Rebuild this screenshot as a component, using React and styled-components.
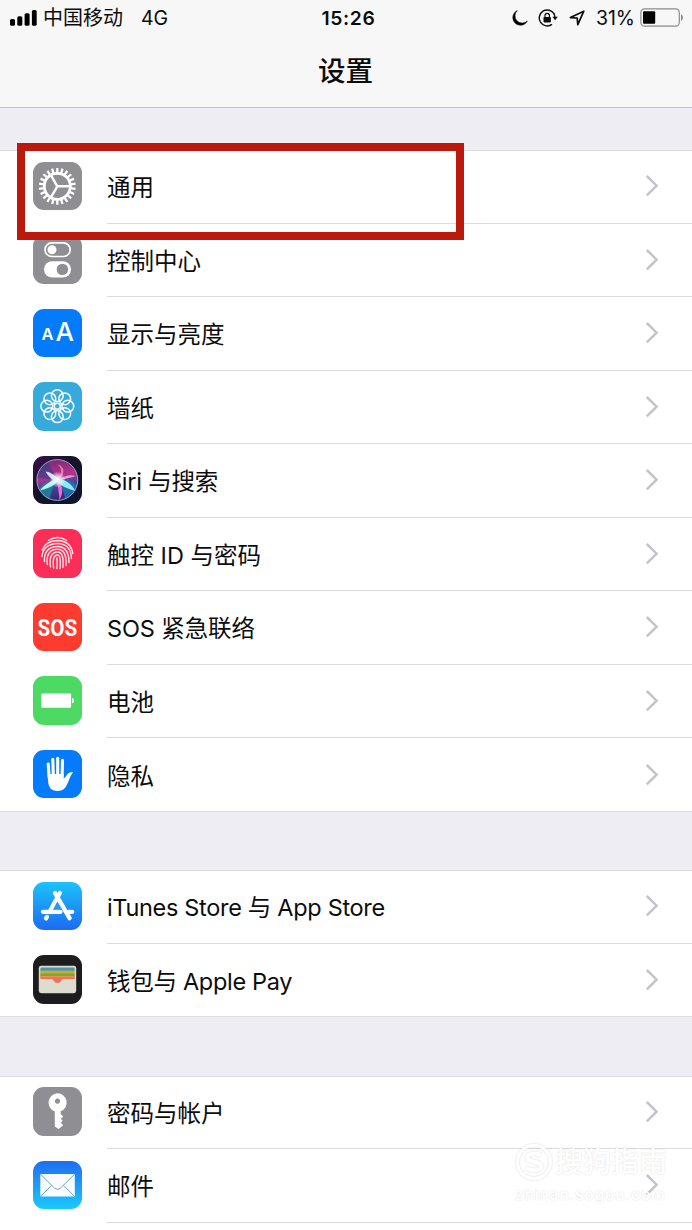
import React from 'react';
import styled, { createGlobalStyle } from 'styled-components';

const GlobalStyle = createGlobalStyle`
  * {
    box-sizing: border-box;
  }

  body {
    margin: 0;
    background: #fff;
    font-family: Inter, "Noto Sans CJK SC", sans-serif;
    color: #0c0c0c;
  }
`;

const Screen = styled.div`
  position: relative;
  width: 692px;
  height: 1230px;
  overflow: hidden;
  background: #eeedf3;
`;

const Header = styled.header`
  height: 107.5px;
  background: #f7f7f7;
  border-bottom: 1px solid #c3c3c6;
`;

const StatusBar = styled.div`
  display: grid;
  grid-template-columns: 1fr auto 1fr;
  align-items: center;
  height: 35px;
  padding: 0 8px 0 10px;
`;

const StatusSide = styled.div`
  display: flex;
  align-items: center;
  justify-content: ${({ $end }) => ($end ? 'flex-end' : 'flex-start')};
`;

const Carrier = styled.span`
  margin-left: 6px;
  padding-top: 1px;
  font-size: 20px;
  line-height: 35px;
`;

const Network = styled.span`
  margin-left: 18px;
  padding-top: 1px;
  font-size: 19.5px;
  line-height: 35px;
`;

const Time = styled.span`
  margin-left: 3px;
  font-size: 19.3px;
  font-weight: 600;
  line-height: 35px;
  letter-spacing: 0.6px;
`;

const Percent = styled.span`
  margin: 0 5px 0 11px;
  padding-top: 1px;
  font-size: 19.5px;
  line-height: 35px;
`;

const StatusIcon = styled.svg`
  flex: none;
  margin-left: ${({ $gap }) => $gap || 0}px;
`;

const Title = styled.h1`
  margin: 0;
  padding-right: 1px;
  font-size: 27.5px;
  font-weight: 500;
  line-height: 72px;
  text-align: center;
`;

const List = styled.main`
  display: flex;
  flex-direction: column;
  gap: 58.5px;
  padding-top: 42.5px;
`;

const Group = styled.section`
  background: #fff;
  box-shadow: inset 0 1px #dcdbe0, inset 0 -1px #dcdbe0;
`;

const Row = styled.div`
  display: flex;
  height: 73.5px;
  padding-left: 33.3px;
`;

const IconTile = styled.div`
  flex: none;
  width: 48.5px;
  height: 48.5px;
  margin: 11.5px 25.2px 0 0;
  border-radius: 11px;
  background: ${({ $bg }) => $bg};
  overflow: hidden;

  svg {
    display: block;
  }
`;

const RowBody = styled.div`
  flex: 1;
  display: flex;
  align-items: center;
  justify-content: space-between;
  padding-right: 33px;
  border-bottom: ${({ $last }) => ($last ? 'none' : '1px solid #dbdbde')};
`;

const Label = styled.span`
  padding-top: 4px;
  font-size: 23.5px;
  line-height: 36px;
  letter-spacing: ${({ $spacing }) => $spacing || 0}px;
  white-space: nowrap;
`;

const Highlight = styled.div`
  position: absolute;
  left: 17px;
  top: 143px;
  width: 447px;
  height: 97px;
  border: 8px solid #ba190c;
`;

const Watermark = styled.div`
  position: absolute;
  left: 515px;
  top: 1141px;
  width: 160px;
  color: #fff;
  text-shadow: 0 0 2px rgba(0, 0, 0, 0.14);
`;

const WatermarkBrand = styled.div`
  display: flex;
  align-items: center;
  gap: 2px;
  font-size: 28px;
  font-weight: 500;
  line-height: 42px;

  svg {
    filter: drop-shadow(0 0 1px rgba(0, 0, 0, 0.15));
  }
`;

const WatermarkUrl = styled.div`
  font-size: 15px;
  font-weight: 600;
  line-height: 24px;
  letter-spacing: 1px;
`;

const Glyph = ({ children }) => (
  <svg width="48.5" height="48.5" viewBox="0 0 48.5 48.5" fill="none">
    {children}
  </svg>
);

const Chevron = () => (
  <svg width="14" height="24" viewBox="0 0 14 24" fill="none">
    <path d="M1.8 2 L11.6 11.7 L1.8 21.4" stroke="#c4c4c9" strokeWidth="2.5" />
  </svg>
);

const GearGlyph = () => (
  <Glyph>
    <g stroke="#fff">
      <circle cx="24.3" cy="24.3" r="13" strokeWidth="2.8" />
      {Array.from({ length: 22 }, (_, i) => (
        <path
          key={i}
          d="M24.3 10.8 V5.9"
          strokeWidth="2.3"
          transform={`rotate(${(i * 360) / 22} 24.3 24.3)`}
        />
      ))}
      <path d="M24.3 24.3 H36.5 M24.3 24.3 L18.2 13.7 M24.3 24.3 L18.2 34.9" strokeWidth="2.4" />
    </g>
  </Glyph>
);

const TogglesGlyph = () => (
  <Glyph>
    <rect x="12" y="7.9" width="25.2" height="13.6" rx="6.8" stroke="#fff" strokeWidth="1.7" />
    <circle cx="19" cy="14.8" r="4.5" fill="#fff" />
    <rect x="11" y="26.2" width="27" height="16.4" rx="8.2" fill="#fff" />
    <circle cx="29.4" cy="34.4" r="5.7" fill="#8e8e93" />
  </Glyph>
);

const TextSizeGlyph = () => (
  <Glyph>
    <g fill="#fff" fontFamily="Inter, sans-serif">
      <text x="8.4" y="31" fontSize="16.5" fontWeight="600">A</text>
      <text x="22.4" y="32.4" fontSize="26" fontWeight="500">A</text>
    </g>
  </Glyph>
);

const FlowerGlyph = () => (
  <Glyph>
    <g stroke="#fff" strokeWidth="1.5">
      {Array.from({ length: 8 }, (_, i) => (
        <circle key={i} cx="24.3" cy="13.7" r="5.9" transform={`rotate(${i * 45} 24.3 24.2)`} />
      ))}
      <circle cx="24.3" cy="24.2" r="3" />
    </g>
  </Glyph>
);

const SiriGlyph = () => (
  <Glyph>
    <defs>
      <linearGradient id="orb" x1="0.4" y1="0" x2="0.6" y2="1">
        <stop offset="0" stopColor="#7b2a78" />
        <stop offset="0.4" stopColor="#b83288" />
        <stop offset="0.62" stopColor="#3e4a9c" />
        <stop offset="1" stopColor="#33246b" />
      </linearGradient>
      <radialGradient id="glow">
        <stop offset="0" stopColor="#fff" />
        <stop offset="0.4" stopColor="#e6f4ff" stopOpacity="0.8" />
        <stop offset="1" stopColor="#fff" stopOpacity="0" />
      </radialGradient>
    </defs>
    <circle cx="24.3" cy="24" r="20.4" fill="url(#orb)" />
    <path d="M24.3 24 L4.5 22 C5 13 10 7 15 6 Z" fill="#2d4488" opacity="0.65" />
    <path d="M25 23 C14 25 8 29 6.5 33 C9 39 13 42 17 43 C18 35 21 28 25 23 Z" fill="#1b8f9f" opacity="0.7" />
    <path d="M24 23 C34 23 41 26 43.5 30 C41 37 37 41 32 43 C31 35 28 28 24 23 Z" fill="#1c78b4" opacity="0.8" />
    <path d="M23.5 24 C25 30 26 37 26.5 44 C30.5 38 30 29 25.5 24 Z" fill="#f465cf" />
    <path d="M23 22.5 C16 26 10 30 7 34.5 C14 32.5 21 30 25 25 Z" fill="#b0fbef" />
    <path d="M25 22 C33 24 39 28.5 42.5 35 C35 33 28 30 24 25.5 Z" fill="#8fe9f5" />
    <path d="M26 23 C21 19 16 15.5 12.5 15.5 C16 21 19 24 24 25.5 Z" fill="#dfdcff" />
    <path d="M24 24 C30 18 29 11 24 8 C30 10 35 17 24 24 Z" fill="#e57ab5" />
    <path d="M24 25 C31 19.5 37 18 43 20 C37 21.5 31 23.5 24 25 Z" fill="#e39ad6" />
    <circle cx="24.6" cy="23.6" r="8" fill="url(#glow)" />
    <circle cx="24.3" cy="24" r="20.4" stroke="#9fb0cc" strokeWidth="0.9" />
  </Glyph>
);

const FingerprintGlyph = () => (
  <Glyph>
    <g stroke="#ffdde4" strokeWidth="1.5" strokeLinecap="round">
      <path d="M15.5 11.4 C21 7.9 28 7.9 33.5 11.4" />
      <path d="M9.3 21 C11 16 15 11.9 24.4 11.6 C34 11.9 38.5 17 39.8 24.5" />
      <path d="M9 27.5 C9.5 20 15 14.6 24.4 14.5 C34 14.6 38.3 21 38.4 29.5" />
      <path d="M11.5 32.5 C10.8 24 15 17.4 24.4 17.4 C32.5 17.4 36 23 36 33.5" />
      <path d="M14.4 35.5 C13 26 16.5 20.2 24.4 20.2 C31 20.2 33.6 26 33 36.5" />
      <path d="M17.5 37.8 C16 29 18.5 23 24.4 23 C29.5 23 30.7 29 30 38.3" />
      <path d="M20.6 39 C19.6 31 20.5 26 24.4 26 C27.5 26 27.8 32 27 39.5" />
      <path d="M24 29 C24.3 33 24.3 36 23.8 39.6" />
    </g>
  </Glyph>
);

const SosGlyph = () => (
  <Glyph>
    <text
      transform="translate(24.3 32.8) scale(0.85 1)"
      textAnchor="middle"
      fill="#fff"
      fontFamily="Roboto, sans-serif"
      fontSize="24.3"
      fontWeight="700"
    >
      SOS
    </text>
  </Glyph>
);

const BatteryGlyph = () => (
  <Glyph>
    <rect x="8.3" y="17.5" width="29.8" height="14.2" rx="0.8" fill="#fff" />
    <path d="M39.2 22 C41.6 22.4 41.6 27 39.2 27.4 Z" fill="#fff" />
  </Glyph>
);

const HandGlyph = () => (
  <Glyph>
    <g stroke="#fff" strokeWidth="3.1" strokeLinecap="round">
      <path d="M15.2 14 L16.2 28" />
      <path d="M19.8 9.2 L20.3 26" />
      <path d="M24.7 8.2 V26" />
      <path d="M29.5 10.2 L29.1 26" />
    </g>
    <path
      d="M14.6 24 H30.7 V28.5 C32.5 27.5 33.8 24.5 35.2 23.3 C36.8 22 39 21.8 40.1 22.6 C38.2 24.5 37.2 27 35.8 30.5 C33.2 37 31 41 24.5 41 C18 41 15.6 37 15.2 32 Z"
      fill="#fff"
    />
  </Glyph>
);

const AppStoreGlyph = () => (
  <Glyph>
    <g stroke="#fff" strokeWidth="4.3" strokeLinecap="round">
      <path d="M26.8 11 L17 29" />
      <path d="M14 34.6 L13 36.3" />
      <path d="M10 29.8 H27.5" />
      <path d="M35.5 29.8 H39.2" />
      <path d="M22 11 L36.6 36.2" />
    </g>
    <path d="M11.5 32.7 H20" stroke="#2090f5" strokeWidth="1.1" />
    <path d="M24.2 20 L28.7 27.2 H20.4 Z" fill="#229bf7" />
  </Glyph>
);

const WalletGlyph = () => (
  <Glyph>
    <rect x="5.8" y="10.8" width="37.4" height="27.4" rx="2.4" fill="#dedccf" />
    <path d="M7.3 14 Q7.3 12.6 8.7 12.6 H40.3 Q41.7 12.6 41.7 14 V16 H7.3 Z" fill="#4a97b5" />
    <rect x="7.3" y="15.6" width="34.4" height="3" fill="#c9a93a" />
    <rect x="7.3" y="18.3" width="34.4" height="3" fill="#74ad2e" />
    <path d="M7.3 21.2 H41.7 V24 H30 C28.4 24 28.3 28 24.4 28 C20.6 28 20.5 24 19 24 H7.3 Z" fill="#f0715f" />
    <path d="M7.3 21.6 H41.7" stroke="#e19a45" strokeWidth="0.9" />
  </Glyph>
);

const KeyGlyph = () => (
  <Glyph>
    <path
      fillRule="evenodd"
      fill="#fff"
      d="M24.5 6.3 a9.3 9.3 0 0 1 3.2 18 V27 L30.2 29.4 L27.9 31.8 L29.6 33.8 L27.9 36 L30.2 38.2 L25.6 42 L21.8 39.4 V24.4 A9.3 9.3 0 0 1 24.5 6.3 Z M24.5 11.6 a2.6 2.6 0 1 0 0.01 0 Z"
    />
  </Glyph>
);

const MailGlyph = () => (
  <Glyph>
    <rect x="7.3" y="13" width="34.5" height="22.4" rx="0.9" fill="#fafdff" />
    <path
      d="M7.8 13.6 L21.6 27.2 Q24.5 29.8 27.4 27.2 L41.3 13.6 M8 35 L18.6 24.4 M41.2 35 L30.5 24.4"
      stroke="#5f9cb8"
      strokeWidth="0.9"
    />
  </Glyph>
);

const groups = [
  [
    { label: '通用', bg: '#8e8e93', icon: GearGlyph },
    { label: '控制中心', bg: '#8e8e93', icon: TogglesGlyph },
    { label: '显示与亮度', bg: '#047bfb', icon: TextSizeGlyph },
    { label: '墙纸', bg: '#35aadb', icon: FlowerGlyph },
    {
      label: 'Siri 与搜索',
      bg: 'linear-gradient(135deg, #3b0f4d, #17122b 45%, #0c1730)',
      icon: SiriGlyph,
      spacing: -0.2,
    },
    { label: '触控 ID 与密码', bg: '#fb2e57', icon: FingerprintGlyph },
    { label: 'SOS 紧急联络', bg: '#fe3b2f', icon: SosGlyph, spacing: -0.1 },
    { label: '电池', bg: '#4cd964', icon: BatteryGlyph },
    { label: '隐私', bg: '#047bfb', icon: HandGlyph },
  ],
  [
    {
      label: 'iTunes Store 与 App Store',
      bg: 'linear-gradient(#1cc3fb, #1d6bf2)',
      icon: AppStoreGlyph,
      spacing: -0.32,
    },
    { label: '钱包与 Apple Pay', bg: '#1d1d1f', icon: WalletGlyph, spacing: -0.3 },
  ],
  [
    { label: '密码与帐户', bg: '#8e8e93', icon: KeyGlyph },
    { label: '邮件', bg: 'linear-gradient(#1f6ef0, #1cc9fc)', icon: MailGlyph },
    { label: '', bg: 'transparent' },
  ],
];

const SettingsRow = ({ item, last }) => {
  const Icon = item.icon;
  return (
    <Row>
      <IconTile $bg={item.bg}>{Icon && <Icon />}</IconTile>
      <RowBody $last={last}>
        <Label $spacing={item.spacing}>{item.label}</Label>
        {Icon && <Chevron />}
      </RowBody>
    </Row>
  );
};

const App = () => {
  return (
    <Screen>
      <GlobalStyle />
      <Header>
        <StatusBar>
          <StatusSide>
            <StatusIcon width="27" height="17" viewBox="0 0 27 17">
              <rect x="0" y="9" width="5" height="6.8" rx="1.6" />
              <rect x="7.3" y="6.2" width="5" height="9.6" rx="1.6" />
              <rect x="14.6" y="3.2" width="5" height="12.6" rx="1.6" />
              <rect x="21.9" y="0" width="4.8" height="15.8" rx="1.6" />
            </StatusIcon>
            <Carrier>中国移动</Carrier>
            <Network>4G</Network>
          </StatusSide>
          <Time>15:26</Time>
          <StatusSide $end>
            <StatusIcon width="16" height="16" viewBox="0 0 16 16">
              <path d="M5.2 0.6 A7.7 7.7 0 1 0 15.4 11 A7 7 0 0 1 5.2 0.6 Z" stroke="#000" strokeWidth="0.5" />
            </StatusIcon>
            <StatusIcon $gap={10} width="20" height="18" viewBox="0 0 20 18" fill="none">
              <path d="M16.2 5 A8 8 0 1 0 14 15.4" stroke="#0c0c0c" strokeWidth="1.4" />
              <path d="M14.4 7.7 H19.8 L17.1 11.2 Z" fill="#0c0c0c" />
              <path d="M16.9 8.5 A8 8 0 0 0 15.6 4.2" stroke="#0c0c0c" strokeWidth="1.4" />
              <rect x="5.5" y="8" width="7.4" height="5.4" rx="0.8" fill="#0c0c0c" />
              <path d="M7 8.4 V6.6 a2.2 2.2 0 0 1 4.4 0 V8.4" stroke="#0c0c0c" strokeWidth="1.2" />
            </StatusIcon>
            <StatusIcon $gap={11} width="16" height="16" viewBox="0 0 16 16" fill="none">
              <path d="M1.4 7.6 L14.8 1.2 L8.8 14.6 L8.2 8 Z" stroke="#0c0c0c" strokeWidth="1.7" strokeLinejoin="round" />
            </StatusIcon>
            <Percent>31%</Percent>
            <StatusIcon width="44" height="20" viewBox="0 0 44 20" fill="none">
              <rect x="0.9" y="0.8" width="38.4" height="17.4" rx="3.6" stroke="#8c8c8c" strokeWidth="1.2" />
              <rect x="3" y="3.2" width="12.2" height="12.6" rx="1" fill="#000" />
              <path d="M41 6.3 C43.6 7.4 43.6 11.8 41 12.9 Z" fill="#8c8c8c" />
            </StatusIcon>
          </StatusSide>
        </StatusBar>
        <Title>设置</Title>
      </Header>
      <List>
        {groups.map((items, g) => (
          <Group key={g}>
            {items.map((item, i) => (
              <SettingsRow key={i} item={item} last={i === items.length - 1} />
            ))}
          </Group>
        ))}
      </List>
      <Highlight />
      <Watermark>
        <WatermarkBrand>
          <svg width="38" height="38" viewBox="0 0 38 38" fill="none" stroke="#fff">
            <circle cx="19" cy="19" r="16.5" strokeWidth="3" />
            <path d="M26 12.5 C22 9.5 12.5 10 12.5 14.6 C12.5 20 26 17.5 26 23.2 C26 28 16 28.5 11.5 25" strokeWidth="4" />
          </svg>
          搜狗指南
        </WatermarkBrand>
        <WatermarkUrl>zhinan.sogou.com</WatermarkUrl>
      </Watermark>
    </Screen>
  );
};

export default App;
